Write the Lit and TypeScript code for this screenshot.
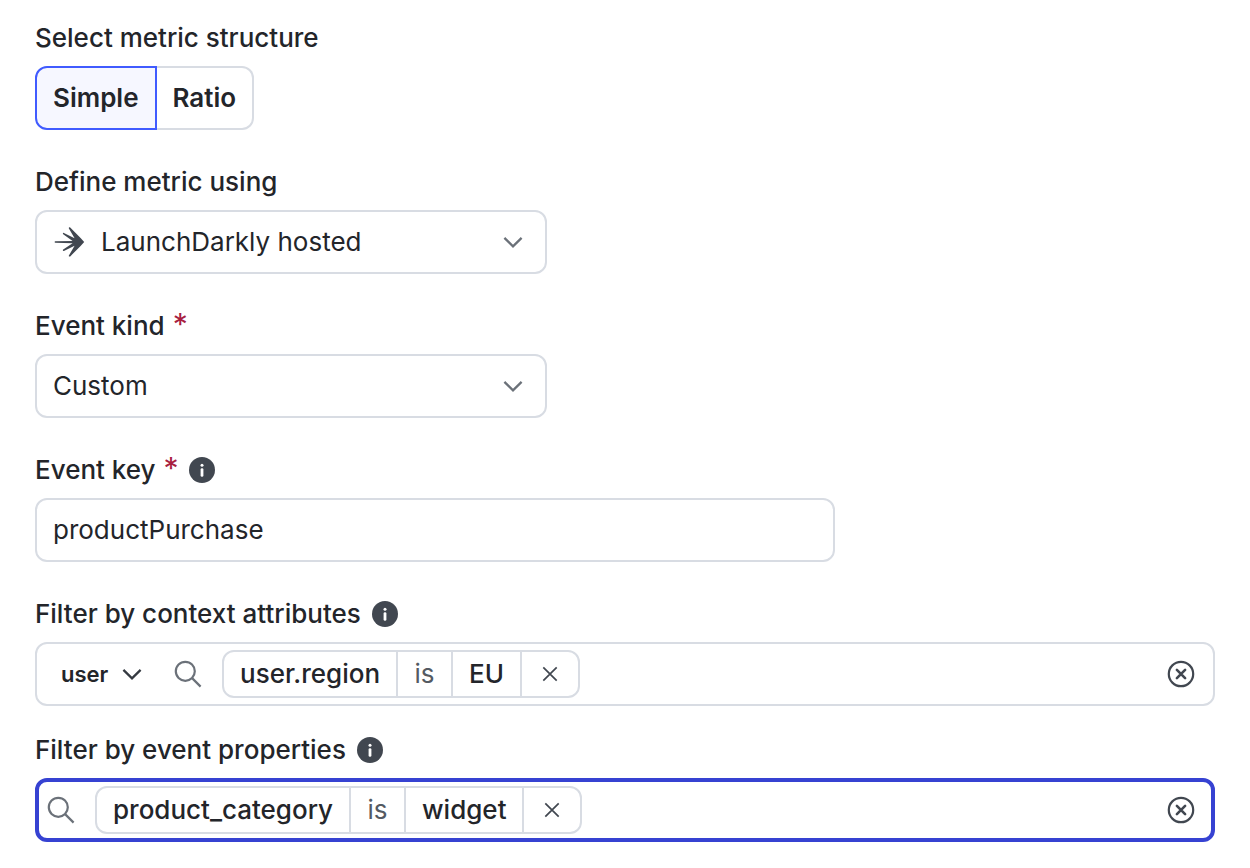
import { LitElement, html, css, nothing } from "lit";
import { customElement, property, state } from "lit/decorators.js";
import { classMap } from "lit/directives/class-map.js";

interface Clause {
  attribute: string;
  operator: string;
  value: string;
}

const shared = css`
  *,
  *::before,
  *::after {
    box-sizing: border-box;
  }
  button,
  input,
  select {
    margin: 0;
    padding: 0;
    border: 0;
    outline: 0;
    background: none;
    color: inherit;
    font: inherit;
    letter-spacing: inherit;
    font-variation-settings: inherit;
  }
  button,
  select {
    cursor: pointer;
  }
  select {
    appearance: none;
  }
  svg {
    display: block;
    flex: none;
  }
  .label-row {
    display: flex;
    align-items: center;
    height: 40px;
    margin-bottom: 8px;
    font-weight: 500;
  }
  .info {
    display: flex;
    margin-left: 11px;
  }
`;

const chevron = html`
  <svg class="chevron" width="20" height="20" viewBox="0 0 20 20" fill="none" stroke="currentColor" stroke-width="2.3" aria-hidden="true">
    <path d="M1.4 5.9 10 14.3 18.6 5.9" />
  </svg>
`;

const infoIcon = html`
  <svg width="26" height="26" viewBox="0 0 26 26" aria-hidden="true">
    <circle cx="13" cy="13" r="13" fill="#414750" />
    <circle cx="13" cy="8.3" r="1.5" fill="#fff" />
    <rect x="11.6" y="11.2" width="2.8" height="8.6" rx="1.4" fill="#fff" />
  </svg>
`;

const searchIcon = html`
  <svg class="search" width="28" height="28" viewBox="0 0 28 28" fill="none" stroke="currentColor" stroke-width="2.2" aria-hidden="true">
    <circle cx="11.3" cy="11.3" r="9.5" />
    <path d="M18.1 18.1 26.6 26.6" />
  </svg>
`;

const removeIcon = html`
  <svg width="16" height="16" viewBox="0 0 16 16" fill="none" stroke="currentColor" stroke-width="1.7" aria-hidden="true">
    <path d="M1.3 1.3 14.7 14.7M14.7 1.3 1.3 14.7" />
  </svg>
`;

const clearIcon = html`
  <svg width="28" height="28" viewBox="0 0 28 28" fill="none" stroke="currentColor" aria-hidden="true">
    <circle cx="14" cy="14" r="12.2" stroke-width="2.2" />
    <path d="M9.9 9.9 18.1 18.1M18.1 9.9 9.9 18.1" stroke-width="2.6" stroke-linecap="round" />
  </svg>
`;

const hostedIcon = html`
  <svg width="32" height="32" viewBox="-1 0 32 32" fill="#414750" aria-hidden="true">
    <path
      d="M30.2 16 26.6 12.1 16.2 1.5C15.4.9 14.4 1.6 14.9 2.5L20.6 12.2 9.9 6.9C9 6.6 8.4 7.7 9.2 8.3L18.6 14.9 1.3 15.2C.4 15.3.4 16.6 1.3 16.7L18.6 17.2 9.2 23.6C8.4 24.2 9 25.3 9.9 25L20.6 19.8 14.9 29.4C14.4 30.3 15.4 31 16.2 30.4L26.6 19.9Z"
    />
  </svg>
`;

@customElement("filter-bar")
export class FilterBar extends LitElement {
  @property() label = "";
  @property() context = "";
  @property({ attribute: false }) clauses: Clause[] = [];
  @property({ type: Boolean }) active = false;

  static styles = [
    shared,
    css`
      :host {
        display: block;
      }
      .bar {
        display: flex;
        align-items: center;
        min-height: 64px;
        padding: 0 18px 0 10px;
        border: 2px solid #d8dce3;
        border-radius: 12px;
      }
      .bar.active {
        padding: 0 16px 0 8px;
        border: 4px solid #3642d2;
      }
      .context {
        display: grid;
        align-items: center;
        padding: 0 32px 0 14px;
      }
      .context > * {
        grid-area: 1 / 1;
      }
      .context select {
        padding-right: 33px;
        font-size: 22px;
        font-weight: 600;
      }
      .context .chevron {
        justify-self: end;
        color: #353a41;
        pointer-events: none;
      }
      .search {
        margin-right: 20px;
        color: #6b7179;
      }
      .pill {
        display: flex;
        height: 48px;
        border: 2px solid #d8dce3;
        border-radius: 12px;
        font-weight: 500;
      }
      .part {
        display: flex;
        align-items: center;
        justify-content: center;
        padding: 0 16px;
        white-space: nowrap;
      }
      .part + .part {
        border-left: 2px solid #d8dce3;
      }
      .operator {
        min-width: 55px;
        color: #545a62;
        font-weight: 400;
      }
      .remove {
        width: 58px;
        color: #414750;
      }
      .query {
        flex: 1;
        min-width: 40px;
        padding: 0 16px;
      }
      .clear {
        display: flex;
        color: #414750;
      }
    `,
  ];

  private remove(index: number) {
    this.clauses = this.clauses.filter((_, i) => i !== index);
  }

  render() {
    return html`
      <div class="label-row">
        <label for="query">${this.label}</label>
        <span class="info">${infoIcon}</span>
      </div>
      <div class=${classMap({ bar: true, active: this.active })}>
        ${this.context
          ? html`<span class="context">
              <select aria-label="Context kind">
                <option>${this.context}</option>
              </select>
              ${chevron}
            </span>`
          : nothing}
        ${searchIcon}
        ${this.clauses.map(
          (clause, i) => html`
            <div class="pill">
              <span class="part">${clause.attribute}</span>
              <span class="part operator">${clause.operator}</span>
              <span class="part">${clause.value}</span>
              <button class="part remove" type="button" aria-label="Remove filter" @click=${() => this.remove(i)}>
                ${removeIcon}
              </button>
            </div>
          `
        )}
        <input class="query" id="query" type="text" autocomplete="off" />
        <button class="clear" type="button" aria-label="Clear all filters" @click=${() => (this.clauses = [])}>
          ${clearIcon}
        </button>
      </div>
    `;
  }
}

@customElement("app-root")
export class AppRoot extends LitElement {
  @state() private structure = "Simple";

  private contextClauses: Clause[] = [{ attribute: "user.region", operator: "is", value: "EU" }];
  private eventClauses: Clause[] = [{ attribute: "product_category", operator: "is", value: "widget" }];

  static styles = [
    shared,
    css`
      :host {
        display: block;
        background: #fff;
        color: #23252a;
        font-family: Inter, "Liberation Sans", sans-serif;
        font-size: 26px;
        line-height: 40px;
        font-variation-settings: "opsz" 14;
      }
      form {
        display: flex;
        flex-direction: column;
        gap: 32px;
        padding: 18px 35px 26px;
      }
      .filters {
        display: flex;
        flex-direction: column;
        gap: 24px;
      }
      .required {
        align-self: flex-start;
        margin-left: 8px;
        color: #a8203f;
        font-size: 30px;
        font-weight: 400;
        line-height: 36px;
      }
      .required + .info {
        margin-left: 10px;
      }
      .segments {
        display: flex;
      }
      .segment {
        height: 64px;
        padding: 0 16px;
        border: 2px solid #d8dce3;
        font-weight: 600;
      }
      .segment:first-child {
        border-radius: 12px 0 0 12px;
      }
      .segment:last-child {
        border-radius: 0 12px 12px 0;
      }
      .segment:not(.selected):last-child {
        border-left: 0;
      }
      .segment:not(.selected):first-child {
        border-right: 0;
      }
      .segment.selected {
        border-color: #405bff;
        background: #f6f7ff;
      }
      .box {
        display: flex;
        align-items: center;
        gap: 16px;
        width: 100%;
        height: 64px;
        border: 2px solid #d8dce3;
        border-radius: 12px;
      }
      .picker {
        max-width: 512px;
        padding: 0 22px 0 16px;
      }
      .picker select {
        flex: 1;
        min-width: 0;
        height: 60px;
      }
      .picker .chevron {
        color: #6b7179;
        pointer-events: none;
      }
      .text {
        max-width: 800px;
        padding: 0 16px 2px;
      }
    `,
  ];

  render() {
    return html`
      <form @submit=${(e: Event) => e.preventDefault()}>
        <div role="group" aria-labelledby="structure">
          <div class="label-row" id="structure">Select metric structure</div>
          <div class="segments">
            ${["Simple", "Ratio"].map(
              (name) => html`<button
                type="button"
                class=${classMap({ segment: true, selected: this.structure === name })}
                aria-pressed=${this.structure === name}
                @click=${() => (this.structure = name)}
              >${name}</button>`
            )}
          </div>
        </div>

        <div>
          <div class="label-row"><label for="source">Define metric using</label></div>
          <div class="box picker">
            ${hostedIcon}
            <select id="source"><option>LaunchDarkly hosted</option></select>
            ${chevron}
          </div>
        </div>

        <div>
          <div class="label-row">
            <label for="kind">Event kind</label><span class="required">*</span>
          </div>
          <div class="box picker">
            <select id="kind" required><option>Custom</option></select>
            ${chevron}
          </div>
        </div>

        <div>
          <div class="label-row">
            <label for="key">Event key</label><span class="required">*</span>
            <span class="info">${infoIcon}</span>
          </div>
          <input class="box text" id="key" type="text" required .value=${"productPurchase"} />
        </div>

        <div class="filters">
          <filter-bar label="Filter by context attributes" context="user" .clauses=${this.contextClauses}></filter-bar>
          <filter-bar label="Filter by event properties" active .clauses=${this.eventClauses}></filter-bar>
        </div>
      </form>
    `;
  }
}
